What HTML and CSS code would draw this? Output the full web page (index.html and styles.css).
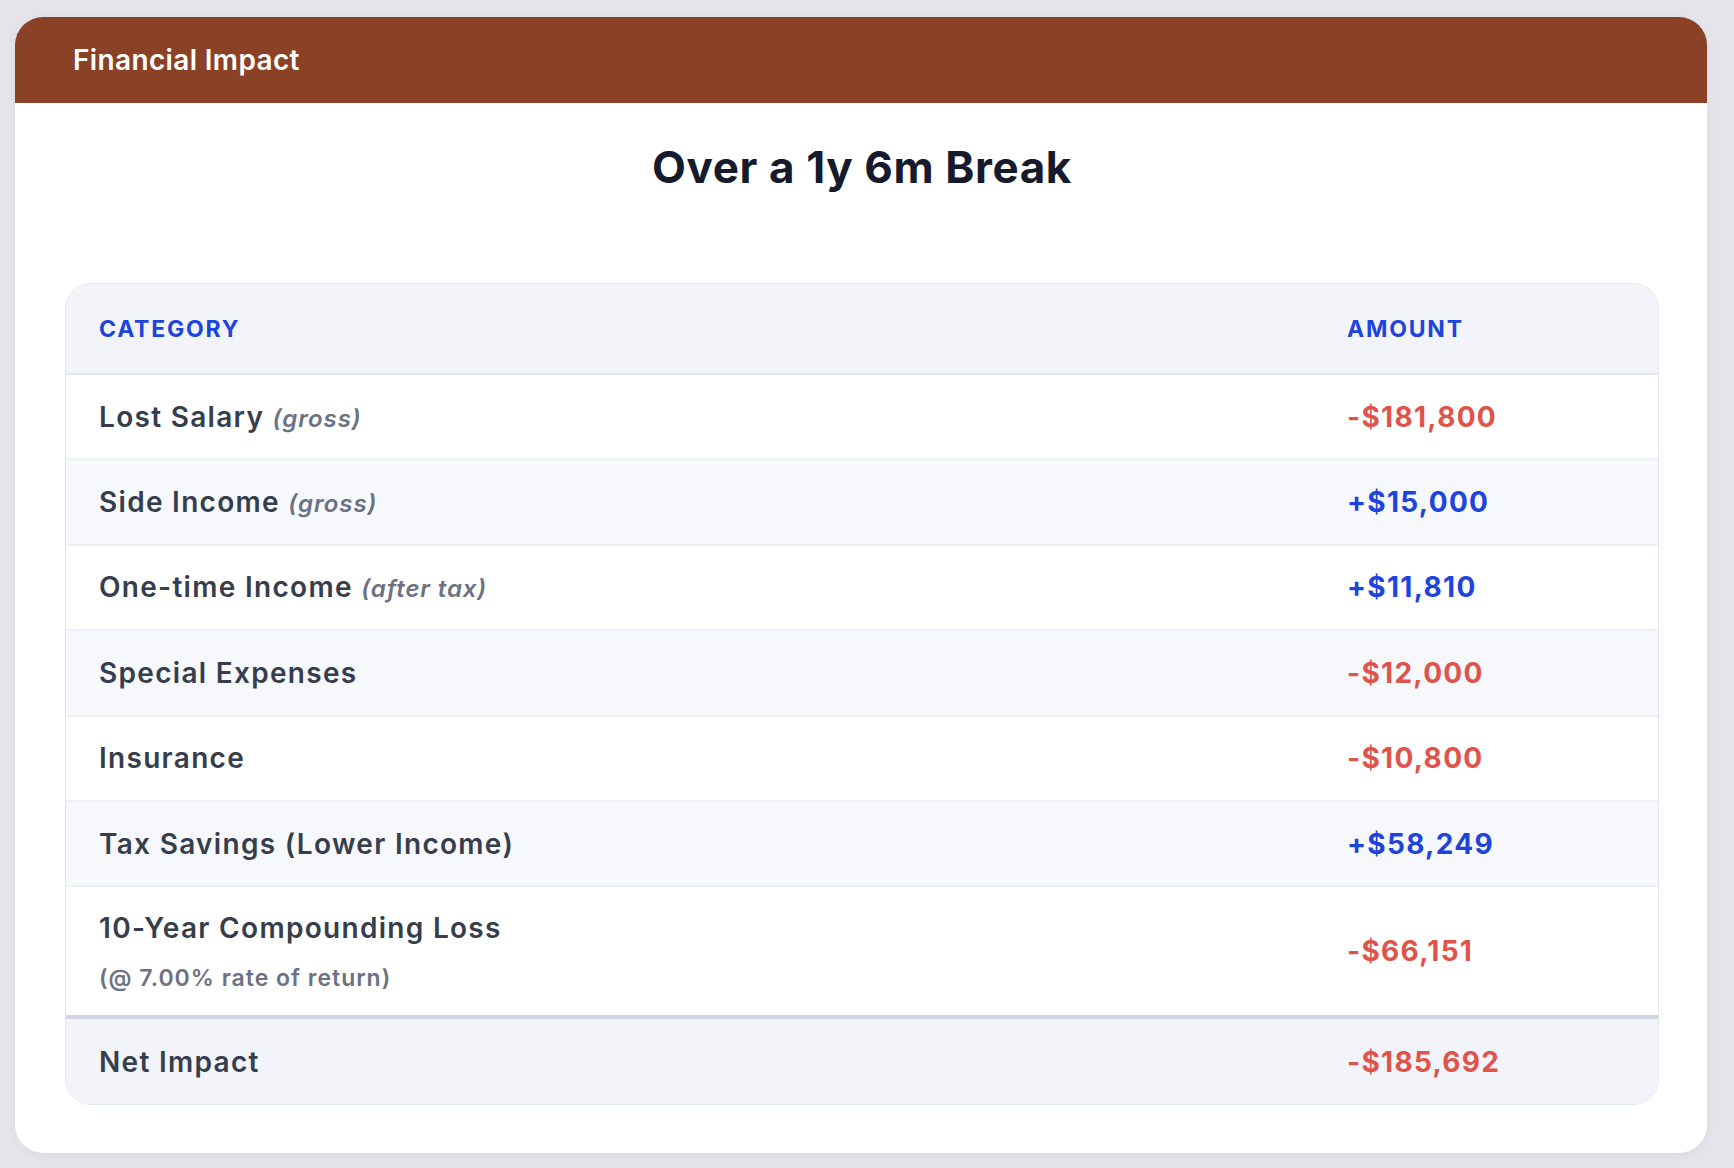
FILE: index.html
```html
<!DOCTYPE html>
<html lang="en">
<head>
<meta charset="utf-8">
<title>Financial Impact</title>
<link rel="stylesheet" href="styles.css">
</head>
<body>
<div class="page">
  <section class="card">
    <header class="card-header">Financial Impact</header>
    <div class="card-body">
      <h1 class="title">Over a 1y 6m Break</h1>
      <div class="table-wrap">
        <table class="impact">
          <thead>
            <tr><th class="col-cat">Category</th><th class="col-amt">Amount</th></tr>
          </thead>
          <tbody>
            <tr><td class="cat">Lost Salary <span class="note">(gross)</span></td><td class="amt neg">-$181,800</td></tr>
            <tr class="alt"><td class="cat">Side Income <span class="note">(gross)</span></td><td class="amt pos">+$15,000</td></tr>
            <tr><td class="cat">One-time Income <span class="note">(after tax)</span></td><td class="amt pos">+$11,810</td></tr>
            <tr class="alt"><td class="cat">Special Expenses</td><td class="amt neg">-$12,000</td></tr>
            <tr><td class="cat">Insurance</td><td class="amt neg">-$10,800</td></tr>
            <tr class="alt"><td class="cat">Tax Savings (Lower Income)</td><td class="amt pos">+$58,249</td></tr>
            <tr class="tall"><td class="cat">10-Year Compounding Loss<div class="sub">(@ 7.00% rate of return)</div></td><td class="amt neg">-$66,151</td></tr>
            <tr class="total"><td class="cat">Net Impact</td><td class="amt neg">-$185,692</td></tr>
          </tbody>
        </table>
      </div>
    </div>
  </section>
</div>
</body>
</html>
```

FILE: styles.css
```css
* { box-sizing: border-box; }
html, body { margin: 0; padding: 0; }
body {
  background: #e4e4ea;
  font-family: "Inter", "Noto Sans", "Liberation Sans", sans-serif;
  color: #374151;
}
.page {
  padding: 17px 27px 16px 15px;
}
.card {
  width: 1692px;
  background: #ffffff;
  border-radius: 28px;
  overflow: hidden;
  box-shadow: 0 2px 10px rgba(60, 60, 80, 0.06);
}
.card-header {
  height: 86px;
  background: #8a4125;
  color: #ffffff;
  font-size: 28px;
  font-weight: 600;
  display: flex;
  align-items: center;
  padding-left: 58px;
  letter-spacing: 0.35px;
}
.card-body {
  padding: 38px 48px 48px 50px;
}
.title {
  margin: 0 0 89px;
  text-align: center;
  font-size: 44px;
  line-height: 53px;
  font-weight: 700;
  color: #151b2d;
  letter-spacing: 0.6px;
}
.table-wrap {
  border: 1px solid #e2e6f1;
  border-radius: 26px;
  overflow: hidden;
}
.impact {
  width: 100%;
  border-collapse: collapse;
}
.impact th {
  height: 90px;
  background: #f3f4f9;
  text-align: left;
  text-transform: uppercase;
  color: #1d44dd;
  font-size: 23px;
  font-weight: 700;
  letter-spacing: 1.8px;
  padding: 0 33px;
  border-bottom: 2px solid #e4e7f1;
}
.impact th.col-amt { width: 344px; }
.impact td {
  height: 85.4px;
  padding: 0 33px;
  border-bottom: 2px solid #edf0f6;
  vertical-align: middle;
  font-size: 28px;
  font-weight: 600;
  color: #363d4c;
  letter-spacing: 1.3px;
}
.impact tr.alt td { background: #f7f8fc; }
.impact .note {
  font-style: italic;
  font-size: 24px;
  font-weight: 600;
  color: #6b7283;
  letter-spacing: 0.9px;
}
.impact .sub {
  font-size: 23px;
  font-weight: 600;
  color: #6b7283;
  margin-top: 19px;
  letter-spacing: 1px;
}
.impact tr.tall td { height: 131px; border-bottom: 4px solid #cfd5e0; }
.impact tr.total td { background: #f3f4f9; border-bottom: none; height: 87px; }
.impact .amt { font-weight: 700; letter-spacing: 1.3px; }
.impact .neg { color: #e0534a; }
.impact .pos { color: #1d44dd; }
```
